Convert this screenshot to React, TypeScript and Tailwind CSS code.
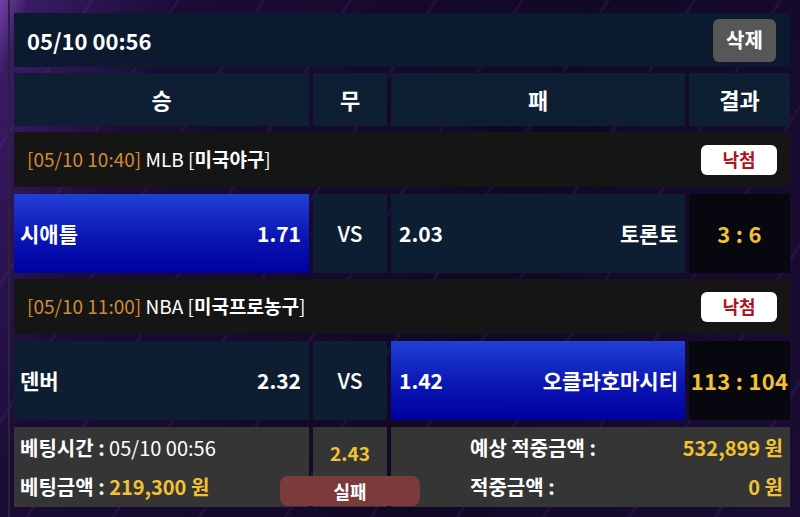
import React from "react";

type Match = {
  time: string;
  league: string;
  category: string;
  home: string;
  homeOdds: string;
  away: string;
  awayOdds: string;
  pick: "home" | "away";
  score: string;
};

const matches: Match[] = [
  {
    time: "05/10 10:40",
    league: "MLB",
    category: "미국야구",
    home: "시애틀",
    homeOdds: "1.71",
    away: "토론토",
    awayOdds: "2.03",
    pick: "home",
    score: "3 : 6",
  },
  {
    time: "05/10 11:00",
    league: "NBA",
    category: "미국프로농구",
    home: "덴버",
    homeOdds: "2.32",
    away: "오클라호마시티",
    awayOdds: "1.42",
    pick: "away",
    score: "113 : 104",
  },
];

const picked = "bg-[linear-gradient(180deg,#2140d6_0%,#0a16b4_55%,#0000a0_100%)]";
const plain = "bg-[#0e1e32]";

function MatchBlock({ m }: { m: Match }) {
  return (
    <>
      <div className="col-span-4 mt-[6px] flex h-[55px] items-center justify-between bg-[#151515] pl-[13px] pr-[13px]">
        <p className="text-[19px] text-white">
          <span className="text-[#d08b35]">[{m.time}]</span> {m.league}{" "}
          [<span className="font-bold">{m.category}</span>]
        </p>
        <span className="flex h-[30px] w-[76px] items-center justify-center rounded-[6px] bg-white text-[18px] font-bold text-[#b3121c]">
          낙첨
        </span>
      </div>

      <div
        className={`mt-[7px] flex h-[79px] items-center justify-between pl-[6px] pr-[8px] text-[21px] font-bold text-white ${
          m.pick === "home" ? picked : plain
        }`}
      >
        <span>{m.home}</span>
        <span>{m.homeOdds}</span>
      </div>
      <div className="mt-[7px] flex h-[79px] items-center justify-center bg-[#0e1e32] text-[21px] font-medium text-white">
        VS
      </div>
      <div
        className={`mt-[7px] flex h-[79px] items-center justify-between pl-[8px] pr-[7px] text-[21px] font-bold text-white ${
          m.pick === "away" ? picked : plain
        }`}
      >
        <span>{m.awayOdds}</span>
        <span>{m.away}</span>
      </div>
      <div className="mt-[7px] flex h-[79px] items-center justify-center whitespace-pre bg-[#07070f] text-[22px] font-bold tracking-[0.3px] text-[#f2c233]">
        {m.score}
      </div>
    </>
  );
}

export default function App() {
  return (
    <div className="min-h-screen w-[800px] overflow-hidden bg-[#120826] bg-[repeating-linear-gradient(-58deg,transparent_0px,transparent_70px,rgba(150,70,200,0.10)_70px,rgba(150,70,200,0.10)_73px),linear-gradient(110deg,#7040a8_0%,#3a1a66_3%,#1a0c36_18%,#110824_60%,#1a0c34_100%)] font-['Noto_Sans_CJK_KR','Noto_Sans',sans-serif]">
      <div className="ml-[8px] h-[517px] border-l-[2px] border-[#2a2535] pl-[4px] pr-[10px] pt-[13px]">
        <div className="grid grid-cols-[295px_74px_294px_101px] gap-x-[4px]">
          <div className="col-span-4 flex h-[54px] items-center justify-between bg-[#0b1a2e] pl-[13px] pr-[14px]">
            <span className="text-[22px] font-bold text-white">05/10 00:56</span>
            <button className="flex h-[43px] w-[63px] items-center justify-center rounded-[6px] bg-[#575757] text-[20px] font-bold text-white">
              삭제
            </button>
          </div>

          {["승", "무", "패", "결과"].map((h) => (
            <div
              key={h}
              className="mt-[6px] flex h-[53px] items-center justify-center bg-[#0e1f34] text-[22px] font-bold text-white"
            >
              {h}
            </div>
          ))}

          {matches.map((m) => (
            <MatchBlock key={m.time} m={m} />
          ))}

          <div className="mt-[7px] flex h-[80px] flex-col justify-center gap-[9px] bg-[#353535] pl-[6px] text-[20px] text-white">
            <p>
              <span className="font-bold">베팅시간 :</span> 05/10 00:56
            </p>
            <p>
              <span className="font-bold">베팅금액 :</span>{" "}
              <span className="font-bold text-[#f2c233]">219,300 원</span>
            </p>
          </div>
          <div className="relative mt-[7px] flex h-[80px] justify-center bg-[#353535] pt-[12px]">
            <span className="text-[19px] font-bold text-[#f2c233]">2.43</span>
            <button className="absolute bottom-[1px] left-[-33px] flex h-[30px] w-[140px] items-center justify-center rounded-[8px] bg-[#7b3b3b] text-[18px] font-bold text-white">
              실패
            </button>
          </div>
          <div className="col-span-2 mt-[7px] flex h-[80px] flex-col justify-center gap-[9px] bg-[#353535] pl-[79px] pr-[7px] text-[20px] font-bold text-white">
            <p className="flex justify-between">
              <span>예상 적중금액 :</span>
              <span className="text-[#f2c233]">532,899 원</span>
            </p>
            <p className="flex justify-between">
              <span>적중금액 :</span>
              <span className="text-[#f2c233]">0 원</span>
            </p>
          </div>
        </div>
      </div>
    </div>
  );
}
